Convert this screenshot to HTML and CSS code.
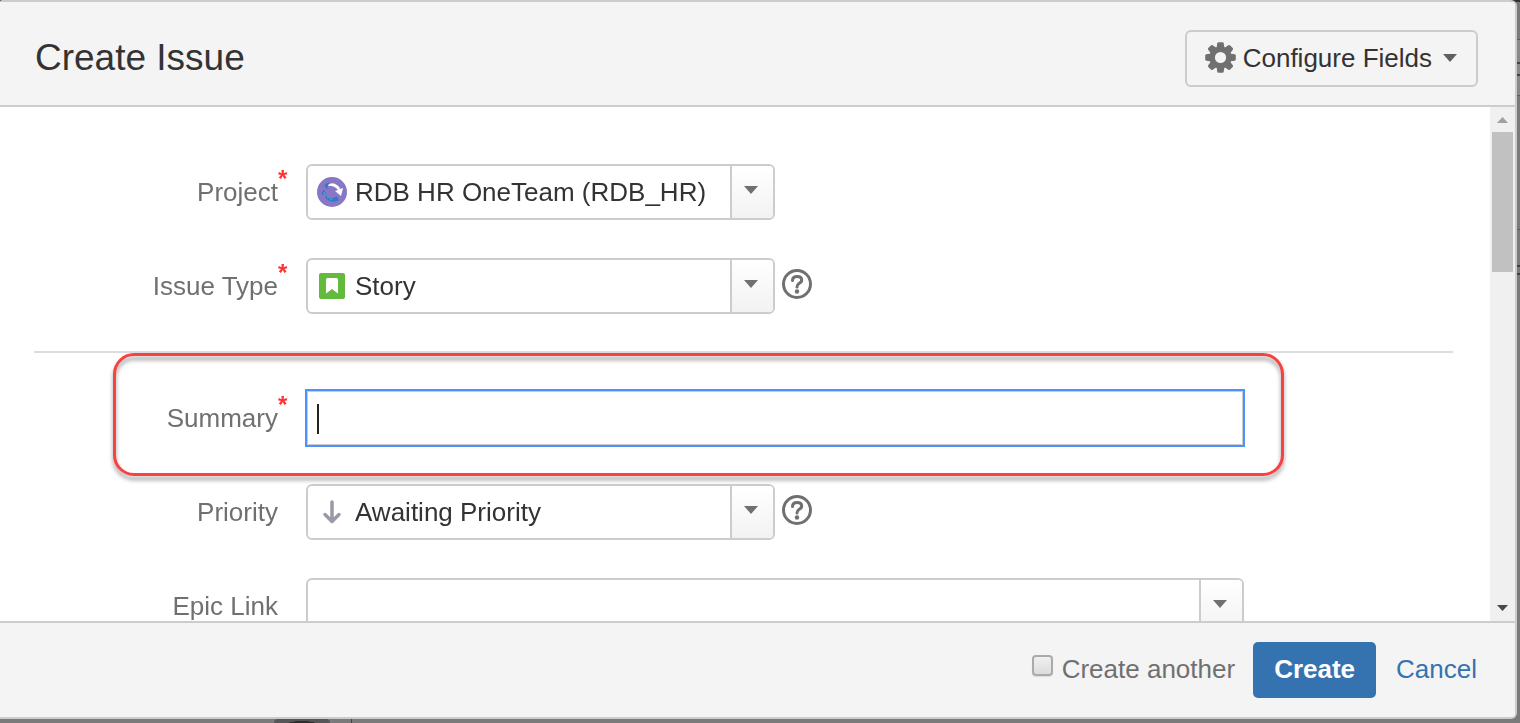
FILE: index.html
```html
<!DOCTYPE html>
<html lang="en">
<head>
<meta charset="utf-8">
<title>Create Issue</title>
<link rel="stylesheet" href="styles.css">
</head>
<body>
<div class="backdrop" aria-hidden="true"><span class="backdrop-avatar"></span><span class="backdrop-edge"></span></div>
<form class="dialog" role="dialog" aria-labelledby="dialog-title">
  <header class="dialog-header">
    <h1 id="dialog-title">Create Issue</h1>
    <button type="button" class="configure">
      <svg class="gear" viewBox="-15.5 -15.5 31 31" aria-hidden="true">
        <g fill="#707070">
          <path id="tooth" d="M-4-9L-3.200-14.200Q-3-15.300-2-15.300H2Q3-15.300 3.200-14.200L4-9V9L3.200 14.200Q3 15.300 2 15.300H-2Q-3 15.300-3.200 14.200L-4 9Z"/>
          <use href="#tooth" transform="rotate(45)"/>
          <use href="#tooth" transform="rotate(90)"/>
          <use href="#tooth" transform="rotate(135)"/>
          <circle r="11"/>
        </g>
        <circle r="5.600" fill="#f4f4f4"/>
      </svg>
      <span>Configure Fields</span>
      <svg class="caret" viewBox="0 0 14 8" aria-hidden="true"><path d="M0 0H14L7 8Z" fill="#606060"/></svg>
    </button>
  </header>

  <div class="dialog-body">
    <div class="fields">
      <div class="row">
        <label for="project">Project<span class="required">*</span></label>
        <div class="control">
          <div class="select short with-icon">
            <select id="project"><option>RDB HR OneTeam (RDB_HR)</option></select>
            <svg class="field-icon" viewBox="0 0 30 30" aria-hidden="true">
              <circle cx="15" cy="15" r="15" fill="#8777c5"/>
              <path d="M9 9Q15 4 20 8Q23 10 23 12L26 11L24 19L18 14L21 13Q17 8 9 9Z" fill="#fff"/>
              <path d="M12 6L8 8L10 12M7 13L5 17L9 16M8 17Q11 22 15 22L20 20L21 23Q15 26 9 21Z" fill="#3579d0" stroke="#2b75ca" stroke-width="1"/>
              <path d="M7 15L8 18L12 21L16 23" fill="none" stroke="#42a4df" stroke-width="1.5" stroke-dasharray="2 1"/>
            </svg>
            <span class="arrow"><svg class="caret" viewBox="0 0 14 8"><path d="M0 0H14L7 8Z" fill="#707070"/></svg></span>
          </div>
        </div>
      </div>
      <div class="row">
        <label for="type">Issue Type<span class="required">*</span></label>
        <div class="control">
          <div class="select short with-icon">
            <select id="type"><option>Story</option></select>
            <svg class="field-icon" viewBox="0 0 30 30" aria-hidden="true">
              <rect x="2" y="2" width="26" height="26" rx="2" fill="#63ba3c"/>
              <path d="M9 8.500Q9 7 10.500 7H19.500Q21 7 21 8.500V22.500L15 18L9 22.500Z" fill="#fff"/>
            </svg>
            <span class="arrow"><svg class="caret" viewBox="0 0 14 8"><path d="M0 0H14L7 8Z" fill="#707070"/></svg></span>
          </div>
          <button type="button" class="help" aria-label="Help">
            <svg viewBox="0 0 30 30"><circle cx="15" cy="15" r="13.500" fill="none" stroke="#707070" stroke-width="3"/><path d="M10.500 11.500Q10.500 7.500 15 7.500Q19.700 7.500 19.700 11Q19.700 13 17 14.500Q15 15.800 15 18" fill="none" stroke="#707070" stroke-width="3" stroke-linecap="round"/><circle cx="15" cy="22.500" r="2.200" fill="#707070"/></svg>
          </button>
        </div>
      </div>
      <hr>
      <div class="row">
        <label for="summary">Summary<span class="required">*</span></label>
        <div class="control">
          <input id="summary" class="text" type="text">
          <span class="cursor"></span>
        </div>
        <span class="callout"></span>
      </div>
      <div class="row">
        <label for="priority">Priority</label>
        <div class="control">
          <div class="select short with-icon">
            <select id="priority"><option>Awaiting Priority</option></select>
            <svg class="field-icon" viewBox="0 0 30 30" aria-hidden="true"><path d="M15 5V24M8 17.500L15 24.500L22 17.500" fill="none" stroke="#9999a8" stroke-width="3.500" stroke-linecap="round" stroke-linejoin="round"/></svg>
            <span class="arrow"><svg class="caret" viewBox="0 0 14 8"><path d="M0 0H14L7 8Z" fill="#707070"/></svg></span>
          </div>
          <button type="button" class="help" aria-label="Help">
            <svg viewBox="0 0 30 30"><circle cx="15" cy="15" r="13.500" fill="none" stroke="#707070" stroke-width="3"/><path d="M10.500 11.500Q10.500 7.500 15 7.500Q19.700 7.500 19.700 11Q19.700 13 17 14.500Q15 15.800 15 18" fill="none" stroke="#707070" stroke-width="3" stroke-linecap="round"/><circle cx="15" cy="22.500" r="2.200" fill="#707070"/></svg>
          </button>
        </div>
      </div>
      <div class="row">
        <label for="epic">Epic Link</label>
        <div class="control">
          <div class="select">
            <select id="epic"><option></option></select>
            <span class="arrow"><svg class="caret" viewBox="0 0 14 8"><path d="M0 0H14L7 8Z" fill="#707070"/></svg></span>
          </div>
        </div>
      </div>
    </div>
    <div class="scrollbar" aria-hidden="true">
      <svg class="scroll-arrow" viewBox="0 0 25 25"><path d="M7 16H18L12.500 10Z" fill="#a0a0a0"/></svg>
      <span class="thumb"></span>
      <svg class="scroll-arrow last" viewBox="0 0 25 25"><path d="M7 9H18L12.500 15Z" fill="#484848"/></svg>
    </div>
  </div>

  <footer class="dialog-footer">
    <label class="another"><input type="checkbox"><span>Create another</span></label>
    <button type="submit" class="create">Create</button>
    <a class="cancel" href="#">Cancel</a>
  </footer>
</form>
</body>
</html>
```
FILE: styles.css
```css
* {
  box-sizing: border-box;
}

body {
  margin: 0;
  overflow: hidden;
  background: #7a7a7b;
  color: #333;
  font: 26px/32px "Liberation Sans", Arial, sans-serif;
}

button,
input,
select {
  margin: 0;
  font: inherit;
  color: inherit;
}

svg {
  display: block;
}

/* Dimmed page behind the dialog */
.backdrop {
  position: fixed;
  inset: 0;
  background: linear-gradient(
    #333 0 2px, transparent 2px 39px,
    #5c5c5e 39px 40px, #88888a 40px 62px,
    #444 62px 64px, #88888a 64px 74px,
    #444 74px 76px, #88888a 76px 95px,
    #5c5c5e 95px 96px, transparent 96px 229px,
    #5c5c5e 229px 230px, transparent 230px 265px,
    #27435f 265px 267px, transparent 267px 273px,
    #27435f 273px 275px, transparent 275px
  );
}

.backdrop-avatar {
  position: absolute;
  left: 274px;
  bottom: 0;
  width: 56px;
  height: 4px;
  border-radius: 28px 28px 0 0;
  background: radial-gradient(ellipse at 50% 100%, #2e2e2e 0 12px, #565658 14px);
}

.backdrop-edge {
  position: absolute;
  left: 351px;
  bottom: 0;
  width: 1px;
  height: 4px;
  background: #444;
}

.dialog {
  position: relative;
  display: flex;
  flex-direction: column;
  height: calc(100vh - 4px);
  margin-right: 3px;
  overflow: hidden;
  border: 2px solid #ccc;
  border-left: 0;
  border-radius: 2px 6px 6px 0;
  background: #fff;
}

.dialog-header {
  display: flex;
  flex: none;
  align-items: center;
  justify-content: space-between;
  padding: 28px 37px 18px 35px;
  border-bottom: 2px solid #ccc;
  background: #f4f4f4;
}

h1 {
  margin: 0;
  padding-bottom: 2px;
  font-size: 37px;
  font-weight: 400;
  line-height: 44px;
}

.configure {
  display: flex;
  align-items: center;
  height: 57px;
  padding: 0 19px 2px 18px;
  border: 2px solid #ccc;
  border-radius: 6px;
  background: #f4f4f4;
}

.gear {
  width: 31px;
  height: 31px;
  margin-right: 7px;
}

.caret {
  width: 14px;
  height: 8px;
}

.configure .caret {
  margin-left: 11px;
}

.dialog-body {
  display: flex;
  flex: 1;
  min-height: 0;
  overflow: hidden;
}

.fields {
  display: flex;
  flex: 1;
  flex-direction: column;
  gap: 38px;
  padding-top: 57px;
}

.row {
  position: relative;
  display: grid;
  flex: none;
  grid-template-columns: 278px minmax(0, 1fr);
  column-gap: 28px;
  align-items: center;
  padding-right: 246px;
}

.row label {
  position: relative;
  color: #707070;
  text-align: right;
}

.required {
  position: absolute;
  top: -13px;
  left: 100%;
  color: #f33;
  font-size: 24px;
  font-weight: 700;
}

.control {
  position: relative;
  display: flex;
  align-items: center;
}

.select {
  position: relative;
  flex: none;
  width: 100%;
}

.short {
  width: 50%;
}

.select select,
.text {
  display: block;
  width: 100%;
  height: 56px;
  padding: 0 48px 0 8px;
  border: 2px solid #ccc;
  border-radius: 6px;
  appearance: none;
  background: #fff;
}

.with-icon select {
  padding-left: 47px;
}

.field-icon {
  position: absolute;
  top: 13px;
  left: 11px;
  width: 30px;
  height: 30px;
}

.arrow {
  position: absolute;
  top: 2px;
  right: 2px;
  bottom: 2px;
  display: flex;
  align-items: center;
  justify-content: center;
  width: 43px;
  padding: 0 4px 4px 0;
  border-left: 2px solid #ccc;
  border-radius: 0 4px 4px 0;
  background: linear-gradient(#fff, #f2f2f2);
  pointer-events: none;
}

.help {
  flex: none;
  width: 30px;
  height: 30px;
  margin: 0 0 4px 7px;
  padding: 0;
  border: 0;
  background: none;
}

hr {
  flex: none;
  width: auto;
  height: 2px;
  margin: -1px 37px -1px 34px;
  border: 0;
  background: #ddd;
}

.select .text,
.text {
  padding-right: 8px;
  border-radius: 0;
  outline: 2px solid #4d90fe;
  outline-offset: -1px;
}

.cursor {
  position: absolute;
  top: 14px;
  left: 11px;
  width: 2px;
  height: 30px;
  background: #222;
}

/* Highlight around the summary field */
.callout {
  position: absolute;
  top: -37px;
  right: 206px;
  bottom: -30px;
  left: 113px;
  border: 3px solid #fa4142;
  border-radius: 21px;
  filter: drop-shadow(0 4px 2px rgba(0, 0, 0, 0.4));
  pointer-events: none;
}

.scrollbar {
  display: flex;
  flex: none;
  flex-direction: column;
  align-items: center;
  width: 25px;
  background: #f0f0f0;
}

.scroll-arrow {
  flex: none;
  width: 25px;
  height: 25px;
}

.last {
  margin-top: auto;
}

.thumb {
  width: 21px;
  height: 140px;
  background: #c1c1c1;
}

.dialog-footer {
  display: flex;
  flex: none;
  align-items: center;
  justify-content: flex-end;
  padding: 19px 38px;
  border-top: 2px solid #ccc;
  background: #f4f4f4;
}

.another {
  display: flex;
  align-items: center;
  padding-bottom: 2px;
  color: #707070;
}

.another input {
  width: 21px;
  height: 21px;
  margin: 0 9px 8px 0;
  border: 2px solid #aaa;
  border-radius: 4px;
  appearance: none;
  background: linear-gradient(#f0f0f0, #dcdcdc);
  box-shadow: 0 1px 1px #ddd;
}

.create {
  height: 56px;
  margin: 0 20px 0 18px;
  padding: 0 21px 2px;
  border: 0;
  border-radius: 5px;
  background: #3572b0;
  color: #fff;
  font-weight: 700;
}

.cancel {
  padding-bottom: 2px;
  color: #3572b0;
  text-decoration: none;
}
```
